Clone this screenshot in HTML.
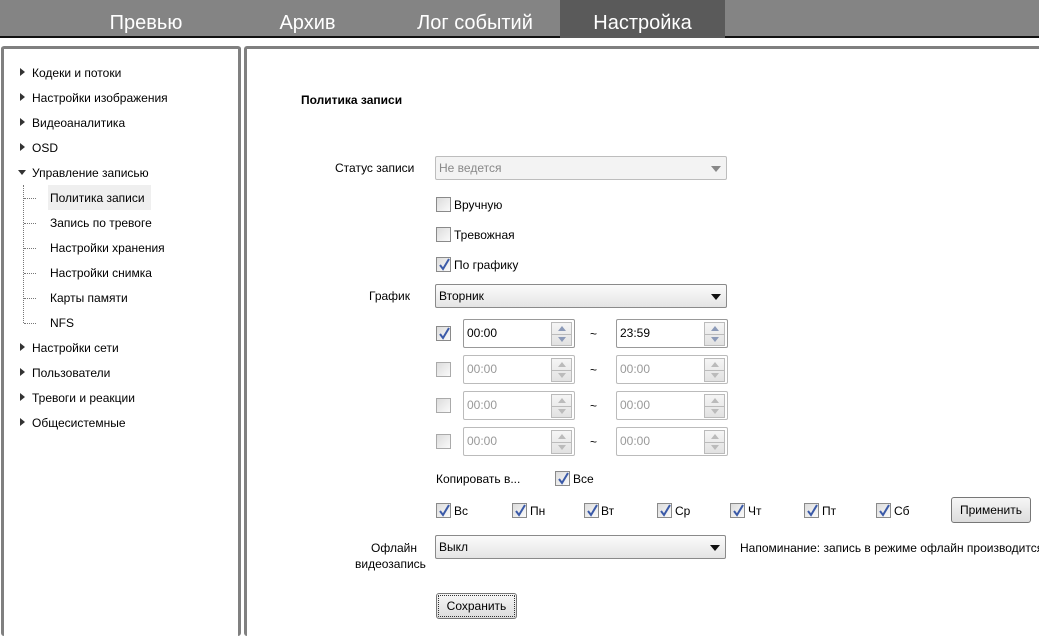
<!DOCTYPE html>
<html><head><meta charset="utf-8"><style>
*{margin:0;padding:0;box-sizing:border-box}
body{width:1039px;height:625px;overflow:hidden;background:#fff;font-family:"Liberation Sans","DejaVu Sans",sans-serif;font-size:12px;color:#000;position:relative}
.a{position:absolute}
.top{left:0;top:0;width:1039px;height:38px;background:#848484;border-bottom:2px solid #111}
.tab{top:0;height:38px;line-height:46px;color:#fff;font-size:20px;text-align:center}
.panel{border:3px solid #808080;border-radius:3px;border-bottom:none}
.t{white-space:nowrap;line-height:14px}
.arr{width:0;height:0;border-top:4px solid transparent;border-bottom:4px solid transparent;border-left:5px solid #333}
.arrd{width:0;height:0;border-left:4px solid transparent;border-right:4px solid transparent;border-top:5px solid #333}
.sel{border:1px solid #8a8a8a;border-radius:2px;background:linear-gradient(#fbfbfb,#e4e4e4);height:24px;line-height:22px;padding-left:3px}
.sel.dis{background:#f3f3f3;border-color:#bdbdbd;color:#888}
.dd{position:absolute;right:5px;top:9px;width:0;height:0;border-left:5px solid transparent;border-right:5px solid transparent;border-top:6px solid #111}
.dis .dd{border-top-color:#888}
.cb{width:15px;height:15px;border:1px solid #8a8a8a;background:linear-gradient(135deg,#dcdcdc,#fafafa)}
.cb.dim{border-color:#aaa}
.cb svg{position:absolute;left:1px;top:0}
.tb{width:112px;height:29px;border:1px solid #bbb;border-radius:2px;background:#fff;line-height:27px;padding-left:3px;font-size:12px}
.tb.en{border-color:#999}
.tb.d{color:#999}
.sp{position:absolute;right:2px;top:2px;width:21px;height:24px;border:1px solid #bbb;background:linear-gradient(#f5f5f5,#e2e2e2)}
.sp:after{content:"";position:absolute;left:0;right:0;top:11px;border-top:1px solid #bbb}
.up,.dn{position:absolute;left:6px;width:0;height:0;border-left:4px solid transparent;border-right:4px solid transparent}
.up{top:3px;border-bottom:5px solid #8c9ab8}
.dn{top:14px;border-top:5px solid #8c9ab8}
.d .up{border-bottom-color:#bbb}.d .dn{border-top-color:#bbb}
.btn{border:1px solid #777;border-radius:3px;background:linear-gradient(#f6f6f6,#dcdcdc);text-align:center}
</style></head><body>
<div class="a top"></div>
<div class="a tab" style="left:62px;width:168px">Превью</div>
<div class="a tab" style="left:225px;width:165px">Архив</div>
<div class="a tab" style="left:390px;width:170px">Лог событий</div>
<div class="a tab" style="left:560px;width:165px;background:#5a5a5a">Настройка</div>

<div class="a panel" style="left:1px;top:46px;width:240px;height:590px"></div>
<div class="a panel" style="left:244px;top:46px;width:800px;height:590px;border-right:none"></div>

<div class="a arr" style="left:20px;top:68px"></div><div class="a t" style="left:32px;top:66px">Кодеки и потоки</div>
<div class="a arr" style="left:20px;top:93px"></div><div class="a t" style="left:32px;top:91px">Настройки изображения</div>
<div class="a arr" style="left:20px;top:118px"></div><div class="a t" style="left:32px;top:116px">Видеоаналитика</div>
<div class="a arr" style="left:20px;top:143px"></div><div class="a t" style="left:32px;top:141px">OSD</div>
<div class="a arrd" style="left:18px;top:170px"></div><div class="a t" style="left:32px;top:166px">Управление записью</div>
<div class="a" style="left:23px;top:185px;height:138px;border-left:1px dotted #777"></div>
<div class="a" style="left:24px;top:198px;width:12px;border-top:1px dotted #777"></div>
<div class="a" style="left:24px;top:223px;width:12px;border-top:1px dotted #777"></div>
<div class="a" style="left:24px;top:248px;width:12px;border-top:1px dotted #777"></div>
<div class="a" style="left:24px;top:273px;width:12px;border-top:1px dotted #777"></div>
<div class="a" style="left:24px;top:298px;width:12px;border-top:1px dotted #777"></div>
<div class="a" style="left:24px;top:323px;width:12px;border-top:1px dotted #777"></div>
<div class="a" style="left:48px;top:185px;width:103px;height:25px;background:#efefef"></div>
<div class="a t" style="left:50px;top:191px">Политика записи</div>
<div class="a t" style="left:50px;top:216px">Запись по тревоге</div>
<div class="a t" style="left:50px;top:241px">Настройки хранения</div>
<div class="a t" style="left:50px;top:266px">Настройки снимка</div>
<div class="a t" style="left:50px;top:291px">Карты памяти</div>
<div class="a t" style="left:50px;top:316px">NFS</div>
<div class="a arr" style="left:20px;top:343px"></div><div class="a t" style="left:32px;top:341px">Настройки сети</div>
<div class="a arr" style="left:20px;top:368px"></div><div class="a t" style="left:32px;top:366px">Пользователи</div>
<div class="a arr" style="left:20px;top:393px"></div><div class="a t" style="left:32px;top:391px">Тревоги и реакции</div>
<div class="a arr" style="left:20px;top:418px"></div><div class="a t" style="left:32px;top:416px">Общесистемные</div>

<div class="a t" style="left:301px;top:93px;font-weight:bold">Политика записи</div>
<div class="a t" style="left:335px;top:161px">Статус записи</div>
<div class="a sel dis" style="left:435px;top:156px;width:292px">Не ведется<div class="dd"></div></div>

<div class="a cb" style="left:436px;top:197px"></div><div class="a t" style="left:454px;top:198px">Вручную</div>
<div class="a cb" style="left:436px;top:227px"></div><div class="a t" style="left:454px;top:228px">Тревожная</div>
<div class="a cb" style="left:436px;top:257px"><svg width="13" height="13"><path d="M2 7 L5 11 L11 1" stroke="#3b5aa8" stroke-width="2" fill="none"/></svg></div><div class="a t" style="left:454px;top:258px">По графику</div>

<div class="a t" style="left:369px;top:289px">График</div>
<div class="a sel" style="left:435px;top:284px;width:292px">Вторник<div class="dd"></div></div>

<div class="a cb" style="left:436px;top:326px"><svg width="13" height="13"><path d="M2 7 L5 11 L11 1" stroke="#3b5aa8" stroke-width="2" fill="none"/></svg></div>
<div class="a tb en" style="left:463px;top:319px">00:00<div class="sp"><div class="up"></div><div class="dn"></div></div></div>
<div class="a t" style="left:590px;top:327px">~</div>
<div class="a tb en" style="left:616px;top:319px">23:59<div class="sp"><div class="up"></div><div class="dn"></div></div></div>

<div class="a cb dim" style="left:436px;top:362px"></div>
<div class="a tb d" style="left:463px;top:355px">00:00<div class="sp"><div class="up"></div><div class="dn"></div></div></div>
<div class="a t" style="left:590px;top:363px">~</div>
<div class="a tb d" style="left:616px;top:355px">00:00<div class="sp"><div class="up"></div><div class="dn"></div></div></div>

<div class="a cb dim" style="left:436px;top:398px"></div>
<div class="a tb d" style="left:463px;top:391px">00:00<div class="sp"><div class="up"></div><div class="dn"></div></div></div>
<div class="a t" style="left:590px;top:399px">~</div>
<div class="a tb d" style="left:616px;top:391px">00:00<div class="sp"><div class="up"></div><div class="dn"></div></div></div>

<div class="a cb dim" style="left:436px;top:434px"></div>
<div class="a tb d" style="left:463px;top:427px">00:00<div class="sp"><div class="up"></div><div class="dn"></div></div></div>
<div class="a t" style="left:590px;top:435px">~</div>
<div class="a tb d" style="left:616px;top:427px">00:00<div class="sp"><div class="up"></div><div class="dn"></div></div></div>

<div class="a t" style="left:436px;top:472px">Копировать в...</div>
<div class="a cb" style="left:555px;top:471px"><svg width="13" height="13"><path d="M2 7 L5 11 L11 1" stroke="#3b5aa8" stroke-width="2" fill="none"/></svg></div><div class="a t" style="left:573px;top:472px">Все</div>

<div class="a cb" style="left:436px;top:503px"><svg width="13" height="13"><path d="M2 7 L5 11 L11 1" stroke="#3b5aa8" stroke-width="2" fill="none"/></svg></div><div class="a t" style="left:454px;top:504px">Вс</div>
<div class="a cb" style="left:512px;top:503px"><svg width="13" height="13"><path d="M2 7 L5 11 L11 1" stroke="#3b5aa8" stroke-width="2" fill="none"/></svg></div><div class="a t" style="left:530px;top:504px">Пн</div>
<div class="a cb" style="left:584px;top:503px"><svg width="13" height="13"><path d="M2 7 L5 11 L11 1" stroke="#3b5aa8" stroke-width="2" fill="none"/></svg></div><div class="a t" style="left:601px;top:504px">Вт</div>
<div class="a cb" style="left:657px;top:503px"><svg width="13" height="13"><path d="M2 7 L5 11 L11 1" stroke="#3b5aa8" stroke-width="2" fill="none"/></svg></div><div class="a t" style="left:675px;top:504px">Ср</div>
<div class="a cb" style="left:730px;top:503px"><svg width="13" height="13"><path d="M2 7 L5 11 L11 1" stroke="#3b5aa8" stroke-width="2" fill="none"/></svg></div><div class="a t" style="left:748px;top:504px">Чт</div>
<div class="a cb" style="left:804px;top:503px"><svg width="13" height="13"><path d="M2 7 L5 11 L11 1" stroke="#3b5aa8" stroke-width="2" fill="none"/></svg></div><div class="a t" style="left:822px;top:504px">Пт</div>
<div class="a cb" style="left:876px;top:503px"><svg width="13" height="13"><path d="M2 7 L5 11 L11 1" stroke="#3b5aa8" stroke-width="2" fill="none"/></svg></div><div class="a t" style="left:894px;top:504px">Сб</div>
<div class="a btn t" style="left:951px;top:497px;width:80px;height:26px;line-height:24px">Применить</div>

<div class="a t" style="left:371px;top:541px">Офлайн</div>
<div class="a t" style="left:355px;top:557px">видеозапись</div>
<div class="a sel" style="left:435px;top:535px;width:291px">Выкл<div class="dd"></div></div>
<div class="a t" style="left:740px;top:541px">Напоминание: запись в режиме офлайн производится</div>

<div class="a btn t" style="left:436px;top:593px;width:81px;height:26px;line-height:24px;outline:1px dotted #333;outline-offset:-3px">Сохранить</div>
</body></html>
